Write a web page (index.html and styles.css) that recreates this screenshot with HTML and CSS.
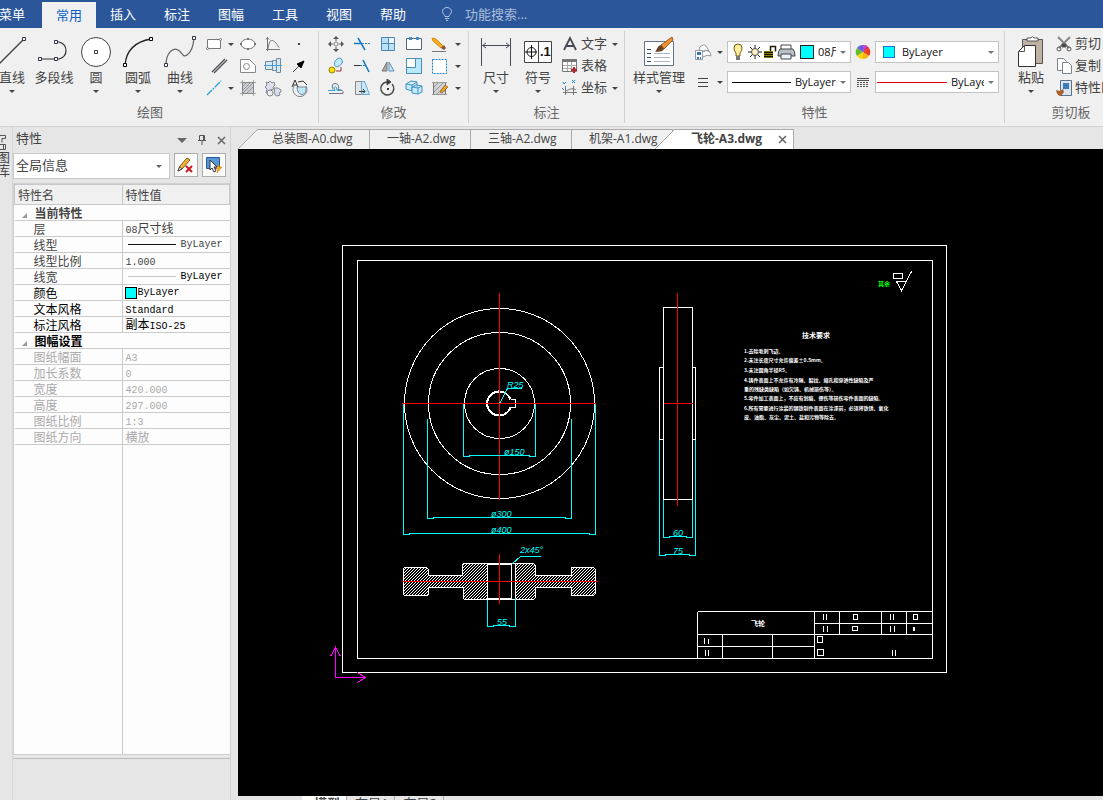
FILE: index.html
```html
<!DOCTYPE html>
<html lang="zh-CN">
<head>
<meta charset="utf-8">
<title>飞轮-A3.dwg</title>
<link rel="stylesheet" href="styles.css">
</head>
<body>
<header class="menubar">
  <nav class="menu">
    <button class="menu-item first">菜单</button>
    <button class="menu-item active">常用</button>
    <button class="menu-item">插入</button>
    <button class="menu-item">标注</button>
    <button class="menu-item">图幅</button>
    <button class="menu-item">工具</button>
    <button class="menu-item">视图</button>
    <button class="menu-item">帮助</button>
  </nav>
  <label class="search">
    <svg width="12" height="14" viewBox="0 0 12 14" fill="none" stroke="#b4c4df"><path d="M4 9.500C4 7.500 1.500 7 1.500 4.500a4.500 4 0 0 1 9 0C10.500 7 8 7.500 8 9.500zM4 11.500h4M5 13.500h2"/></svg>
    <input type="text" placeholder="功能搜索..." aria-label="功能搜索">
  </label>
</header>

<section class="ribbon">
  <div class="group draw">
    <div class="group-body">
      <div class="bigs">
      <button class="big"><svg width="32" height="32" viewBox="0 0 32 32"><path d="M0 31L28 3" stroke="#444" stroke-width="1.500"/><path d="M26.500 1.500h3v3h-3z" fill="#fff" stroke="#2b3440"/></svg><span>直线</span><i class="arrow"></i></button>
      <button class="big"><svg width="32" height="32" viewBox="0 0 32 32" fill="none" stroke="#333"><path d="M3 23h15M18 6h3q7 2 7 8.500T21 23h-3" stroke-width="1.200"/><path d="M.5 21.500h3v3h-3zM16.500 21.500h3v3h-3zM16.500 4.500h3v3h-3z" fill="#fff" stroke="#2b3440"/></svg><span>多段线</span></button>
      <button class="big"><svg width="32" height="32" viewBox="0 0 32 32" fill="#fff" stroke="#444"><circle cx="16" cy="16" r="14.500"/><path d="M14.500 14.500h3v3h-3z"/></svg><span>圆</span><i class="arrow"></i></button>
      <button class="big"><svg width="32" height="32" viewBox="0 0 32 32" fill="none"><path d="M3 29Q5 7 29 3" stroke="#222" stroke-width="1.300"/><path d="M1.500 27.500h3v3h-3zM27.500 1.500h3v3h-3z" fill="#fff" stroke="#000"/></svg><span>圆弧</span><i class="arrow"></i></button>
      <button class="big"><svg width="32" height="32" viewBox="0 0 32 32" fill="none"><path d="M2 29C2 17 9 11 14 14s5 8 9 5q6-4 7-17" stroke="#666" stroke-width="1.300"/><path d="M.5 27.500h3v3h-3zM28.500.5h3v3h-3z" fill="#fff" stroke="#2b3440"/></svg><span>曲线</span><i class="arrow"></i></button>
      </div>
      <div class="tools draw-tools">
        <button class="tool" aria-label="矩形"><svg width="18" height="18" viewBox="0 0 18 18" fill="#fff" stroke="#777"><path d="M2.500 4.500h13v9h-13z"/><circle cx="2.500" cy="13.500" r="1"/><circle cx="15.500" cy="4.500" r="1"/></svg><i class="arrow"></i></button>
        <button class="tool" aria-label="椭圆"><svg width="18" height="18" viewBox="0 0 18 18" fill="#fff" stroke="#777"><ellipse cx="9" cy="9" rx="7" ry="5"/><path d="M1 8h2v2H1zM15 8h2v2h-2zM8 3h2v2H8zM8 13h2v2H8z" fill="#777" stroke="none"/></svg></button>
        <button class="tool" aria-label="公式曲线"><svg width="18" height="18" viewBox="0 0 18 18" fill="none" stroke="#777"><path d="M3.500 2v14M2 14.500h14M2 4.500l1.500-2 1.500 2M4 14C5 7 6 5.500 8 5.500s4 2 7 7"/></svg></button>
        <button class="tool" aria-label="点"><svg width="18" height="18" viewBox="0 0 18 18"><path d="M8 8h2v2H8z" fill="#444"/></svg></button>
        <button class="tool" aria-label="平行线"><svg width="18" height="18" viewBox="0 0 18 18" stroke="#4d4d55" stroke-width="1.400"><path d="M2 15L15 2M4 16L17 3"/></svg></button>
        <button class="tool" aria-label="局部放大"><svg width="18" height="18" viewBox="0 0 18 18" fill="#fff" stroke="#888"><path d="M1.500 2.500h9l6 6v7h-15z"/><circle cx="7.500" cy="9.500" r="3"/></svg></button>
        <button class="tool" aria-label="轴"><svg width="18" height="18" viewBox="0 0 18 18" fill="#d4e8f5" stroke="#718b9c"><path d="M1.500 4.500v8h7v-8zM8.500 3.500v10h4v-10zM12.500 1.500v14h4v-14z"/><path d="M0 8.500h18" stroke="#48a2d8"/></svg></button>
        <button class="tool" aria-label="箭头"><svg width="18" height="18" viewBox="0 0 18 18"><path d="M3 15l6-6" stroke="#444"/><path d="M14 4L7 7l4 4z" stroke="#000"/></svg></button>
        <button class="tool" aria-label="中心线"><svg width="18" height="18" viewBox="0 0 18 18"><path d="M2 16L16 2" stroke="#2aa2df" stroke-width="1.300" stroke-dasharray="7 1 2 1"/></svg><i class="arrow"></i></button>
        <button class="tool" aria-label="剖面线"><svg width="18" height="18" viewBox="0 0 18 18" stroke="#888" fill="#c8cbd0"><path d="M3.500 3.500h11v11h-11z"/><path d="M4 7l3-3M4 11l7-7M4 14L14 4M8 14l6-6M3.500 1v16M14.500 1v16M1 3.500h16M1 14.500h16" stroke-width=".7"/></svg></button>
        <button class="tool" aria-label="齿轮"><svg width="18" height="18" viewBox="0 0 18 18" fill="#d9dfeb" stroke="#818894"><path d="M2 3l2 1 2-2 2 2 2-1 1 3-2 2 1 2-4 1-1 4-3-1 1-4-2-2 2-2z"/><path d="M10 9h4l3 2v2l-2 1 1 2-3 1-2-1z"/><circle cx="6" cy="14" r="3" fill="#eee"/></svg></button>
        <button class="tool" aria-label="填充"><svg width="18" height="18" viewBox="0 0 18 18" fill="none" stroke="#7a8794"><path d="M4 7a7 7 0 1 0 12 0"/><path d="M7 8h9q1 6-4 8Q7 14 7 8" fill="#bfe7fa"/><path d="M2 8l3-7 3 7M3 6h4M8 3l5-1 4 4" stroke="#333"/></svg></button>
      </div>
    </div>
    <div class="group-label">绘图</div>
  </div>

  <div class="group modify">
    <div class="group-body">
      <div class="tools modify-tools">
        <button class="tool" aria-label="平移"><svg width="18" height="18" viewBox="0 0 18 18" fill="#555"><path d="M9 1l3 3H6zM9 17l3-3H6zM1 9l3-3v6zM17 9l-3-3v6z"/><path d="M9 4v2M9 12v2M4 9h2M12 9h2" stroke="#555"/><circle cx="9" cy="9" r="2" fill="#fff" stroke="#777"/></svg></button>
        <button class="tool" aria-label="裁剪"><svg width="18" height="18" viewBox="0 0 18 18"><path d="M1 8.500h8M5 3l7 12" stroke="#1378c8" stroke-width="1.500"/><path d="M9 8.500h8" stroke="#2789c8" stroke-dasharray="2 1"/></svg></button>
        <button class="tool" aria-label="阵列"><svg width="18" height="18" viewBox="0 0 18 18"><path d="M2.500 2.500h13v13h-13z" fill="#b9e2f8" stroke="#5187a8"/><path d="M3 8.500h12M9.500 3v12" stroke="#5187a8"/><path d="M10 3h5v5h-5z" fill="#e9f8ff"/></svg></button>
        <button class="tool" aria-label="打断"><svg width="18" height="18" viewBox="0 0 18 18" fill="#fff" stroke="#526579"><path d="M4 3.500H1.500v11h15v-11H14M7 3.500h4"/><path d="M4 2h3v3H4zM11 2h3v3h-3z" fill="#3b90cd" stroke="none"/></svg></button>
        <button class="tool" aria-label="删除"><svg width="20" height="18" viewBox="0 0 20 18"><path d="M2 3l4 1 7 7-2 2-8-7z" fill="#f7ad20" stroke="#d88809"/><path d="M11 13l3-3 2 3-2 2z" fill="#8b4f3a"/><path d="M2 16.500h14" stroke="#777"/></svg><i class="arrow"></i></button>
        <button class="tool" aria-label="复制"><svg width="18" height="18" viewBox="0 0 18 18"><path d="M9 3q4-4 6 0t-5 7q-5-2-1-7z" fill="#bdeaff" stroke="#5693b1"/><circle cx="5" cy="13" r="3" fill="#f7dc00" stroke="#938400"/><path d="M9 14h5v-4" fill="none" stroke="#a53030"/></svg></button>
        <button class="tool" aria-label="延伸"><svg width="18" height="18" viewBox="0 0 18 18"><path d="M1 8.500h6" stroke="#333"/><path d="M7 8.500h6" stroke="#1683d1" stroke-dasharray="2 1"/><path d="M10 3l6 12" stroke="#1176bd" stroke-width="1.500"/></svg></button>
        <button class="tool" aria-label="镜像"><svg width="18" height="18" viewBox="0 0 18 18"><path d="M8 5v9H3z" fill="#aaa" stroke="#777"/><path d="M10 5v9h5z" fill="#c2e9ff" stroke="#608eaa"/></svg></button>
        <button class="tool" aria-label="缩放"><svg width="18" height="18" viewBox="0 0 18 18" stroke="#4a8cb6"><path d="M1.500 1.500h15v15h-15z" fill="#b9e7fc"/><path d="M1.500 1.500h9v9h-9z" fill="#fff"/></svg></button>
        <button class="tool" aria-label="拉伸"><svg width="20" height="18" viewBox="0 0 20 18"><path d="M2.500 2.500h14v14h-14z" fill="#fff" stroke="#1887c5" stroke-dasharray="2 1"/></svg><i class="arrow"></i></button>
        <button class="tool" aria-label="等距线"><svg width="18" height="18" viewBox="0 0 18 18" fill="none"><path d="M2 14.500h14q1-4-5-4 2-6-3-6-4 0-2 6" stroke="#697581"/><path d="M1 11.500h7q-2-4 0-4t2 4h4" stroke="#31a1d9"/></svg></button>
        <button class="tool" aria-label="倒角"><svg width="18" height="18" viewBox="0 0 18 18"><path d="M2.500 2.500h6v13h-6z" fill="#e2e4e6" stroke="#888"/><path d="M8.500 2.500h3l5 13h-8z" fill="#cbeaf9" stroke="#66a9cf"/><path d="M6 12.500h6M10 10l2 2.500-2 2" fill="none" stroke="#333"/></svg></button>
        <button class="tool" aria-label="旋转"><svg width="18" height="18" viewBox="0 0 18 18" fill="none" stroke="#4a4a4a"><path d="M8 3a6.500 6.500 0 1 0 5 2" stroke-width="1.500"/><path d="M8 0v6l4-3z" fill="#333"/><path d="M8 9h2v2H8z" fill="#333" stroke="none"/></svg></button>
        <button class="tool" aria-label="块"><svg width="18" height="18" viewBox="0 0 18 18" fill="#c7eaff" stroke="#3e93c5"><path d="M1 5l5-3 6 1v7l-5 2-6-2zM1 5l6 1 5-3M7 6v6"/><path d="M7 8l4-2 6 1v6l-4 2-6-1zM7 8l6 1 4-2M13 9v6"/></svg></button>
        <button class="tool" aria-label="剖面编辑"><svg width="20" height="18" viewBox="0 0 20 18"><path d="M3.500 3.500h12v12h-12z" fill="#d0d2d4" stroke="#777"/><path d="M2 3.500h15M2 15.500h15M4 8l4-4M4 13l9-9M7 15l8-8" stroke="#999"/><path d="M10 13l5-7 3 2-6 6z" fill="#eba31f" stroke="#8b5623" stroke-width=".7"/></svg><i class="arrow"></i></button>
      </div>
    </div>
    <div class="group-label">修改</div>
  </div>

  <div class="group annotate">
    <div class="group-body">
      <div class="bigs">
      <button class="big"><svg width="32" height="32" viewBox="0 0 32 32" fill="none" stroke="#454b58"><path d="M1.500 2v28M30.500 2v28M3 9.500h26M6 7L2.500 9.500 6 12M26 7l3.500 2.500L26 12"/></svg><span>尺寸</span><i class="arrow"></i></button>
      <button class="big"><svg width="32" height="32" viewBox="0 0 32 32"><path d="M2.500 5.500h27v21h-27zM16.500 5.500v21" fill="#fff" stroke="#444"/><path d="M9.500 9v14M3 16h12" stroke="#111"/><circle cx="9.500" cy="16" r="4.500" fill="none" stroke="#111"/><text x="18" y="20" class="symbol-text">.1</text></svg><span>符号</span><i class="arrow"></i></button>
      </div>
      <div class="rows">
        <button class="row-tool"><svg width="18" height="18" viewBox="0 0 18 18"><path d="M3 15L9 3l6 12M5 11h8" fill="none" stroke="#454b55" stroke-width="1.800"/></svg><span>文字</span><i class="arrow"></i></button>
        <button class="row-tool"><svg width="18" height="18" viewBox="0 0 18 18"><path d="M1.500 2.500h14v12h-14z" fill="#fff" stroke="#777"/><path d="M1 2h15v3H1z" fill="#777"/><path d="M2 8.500h13M2 11.500h13M6.500 5v9M10.500 5v9" stroke="#aaa"/><path d="M13 10v6M10 13h6" stroke="#b9232d" stroke-width="2"/></svg><span>表格</span></button>
        <button class="row-tool"><svg width="18" height="18" viewBox="0 0 18 18" fill="none"><path d="M4.500 7v9M2 13.500h14M5 12q7-4 10-1M12.500 7v9" stroke="#777"/><path d="M2 3l1 2 2-2M11 1l3 3M14 1l-3 3M1 9l2 2" stroke="#168cca"/></svg><span>坐标</span><i class="arrow"></i></button>
      </div>
    </div>
    <div class="group-label">标注</div>
  </div>

  <div class="group props">
    <div class="group-body">
      <button class="big wide"><svg width="32" height="32" viewBox="0 0 32 32"><path d="M1.500 5.500h29v24h-29z" fill="#fff" stroke="#60748b"/><path d="M4 13.500h4M4 17.500h4M4 21.500h4M4 25.500h4" stroke="#34506e"/><path d="M11 17.500h16M11 21.500h16M11 25.500h16" stroke="#a9b6c9"/><path d="M29 1L18 9l3 4 9-9z" fill="#e89432" stroke="#9d5a20"/><path d="M18 9l3 4c-2 4-6 2-9 3 2-2 2-6 6-7z" fill="#69401f"/></svg><span>样式管理</span><i class="arrow"></i></button>
      <div class="prop-grid">
        <button class="tool" aria-label="图层"><svg width="18" height="18" viewBox="0 0 18 18" fill="#fff" stroke="#919aa5"><path d="M5 5q5-5 7-2l3 5q-3-2-8 1zM8 9q5-3 8 0l1 4q-4-2-8 1z"/><path d="M1.500 7.500h7v9h-7z"/><path d="M3 9h4v3H3zM3 14h2v2H3zM6 14h1v2H6z" fill="#3275b0" stroke="none"/></svg><i class="arrow"></i></button>
        <div class="combo">
          <svg width="69" height="18" viewBox="0 0 69 18">
            <path d="M3 5q0-4 4-4t4 4q0 3-2 5v3H5v-3Q3 8 3 5z" fill="#ffef9a" stroke="#755b1b"/><path d="M5 13h4v4H5z" fill="#777"/>
            <path d="M24 2v3M24 13v3M17 9h3M28 9h3M19 4l2 2M27 12l2 2M29 4l-2 2M19 14l2-2" stroke="#222"/><circle cx="24" cy="9" r="3.500" fill="#ffedc7" stroke="#444"/>
            <path d="M33 8h9v7h-9z" fill="#8b7c00"/><path d="M33 9.500h9M33 11.500h9M33 13.500h9" stroke="#111"/><path d="M39.500 8V3.500h5v5" fill="none" stroke="#221d00" stroke-width="1.500"/>
            <path d="M50 2h10v6H50z" fill="#fff" stroke="#444"/><path d="M49 6h13q2 2 2 7H47q0-5 2-7z" fill="#b8c0c7" stroke="#444"/><path d="M50 11h10v5H50z" fill="#eaf4ff" stroke="#444"/>
          </svg>
          <i class="swatch"></i>
          <select class="layer" aria-label="层"><option>08尺寸线</option></select>
        </div>
        <svg class="picon" width="16" height="16" viewBox="0 0 16 16"><path d="M8 8V1a7 7 0 0 1 6 3z" fill="#ee233a"/><path d="M8 8l6-4a7 7 0 0 1 0 8z" fill="#e93c24"/><path d="M8 8l6 4a7 7 0 0 1-6 3z" fill="#f5b60f"/><path d="M8 8v7a7 7 0 0 1-6-3z" fill="#ffd50a"/><path d="M8 8l-6 4a7 7 0 0 1 0-8z" fill="#69bd2b"/><path d="M8 8L2 4a7 7 0 0 1 6-3z" fill="#5c64e2"/><path d="M8 1a7 7 0 0 1 4 1L8 8z" fill="#bf49ee"/></svg>
        <div class="combo color">
          <i class="swatch blue"></i>
          <select aria-label="颜色"><option>ByLayer</option></select>
        </div>
        <button class="tool" aria-label="线宽"><svg width="18" height="18" viewBox="0 0 18 18" stroke="#444"><path d="M4 5.500h10M4 9.500h10M4 13.500h10"/></svg><i class="arrow"></i></button>
        <div class="combo">
          <i class="sample black"></i>
          <select aria-label="线宽值"><option>ByLayer</option></select>
        </div>
        <svg class="picon" width="16" height="16" viewBox="0 0 16 16" stroke="#555"><path d="M2 4.500h12M2 6.500h12"/><path d="M2 8.500h12M2 10.500h12M2 12.500h12" stroke-dasharray="2 1"/></svg>
        <div class="combo">
          <i class="sample red"></i>
          <select aria-label="线型"><option>ByLayer</option></select>
        </div>
      </div>
    </div>
    <div class="group-label">特性</div>
  </div>

  <div class="group clip">
    <div class="group-body">
      <button class="big"><svg width="32" height="32" viewBox="0 0 32 32"><path d="M7.500 3.500h20v24h-20z" fill="#bfb2a3" stroke="#555"/><path d="M12 5V2h4q1-3 3 0h4v3z" fill="#fff" stroke="#555"/><path d="M9.500 9.500h11v21h-17V15.500z" fill="#fff" stroke="#333"/><path d="M4 15.500h5.500v-6" fill="none" stroke="#555"/></svg><span>粘贴</span><i class="arrow"></i></button>
      <div class="rows">
        <button class="row-tool"><svg width="18" height="18" viewBox="0 0 18 18" fill="none" stroke="#555"><path d="M3 2l11 11M15 2L4 13" stroke="#888" stroke-width="2"/><circle cx="4" cy="14" r="2"/><circle cx="14" cy="14" r="2"/><path d="M7 9h4v3H7z" fill="#444"/></svg><span>剪切</span></button>
        <button class="row-tool"><svg width="18" height="18" viewBox="0 0 18 18" fill="#fff" stroke="#7b858e"><path d="M2.500 1.500h6l3 3v9h-9z"/><path d="M7.500 5.500h6l3 3v8h-9z"/></svg><span>复制</span></button>
        <button class="row-tool"><svg width="18" height="18" viewBox="0 0 18 18"><path d="M5.500 1.500h11v15h-11z" fill="#dce4ef" stroke="#59738d"/><path d="M8 4h6v6H8z" fill="#3b7cb5"/><path d="M1 11l4 1 3-2 1 3-3 4q-4 0-5-6z" fill="#a9612c"/></svg><span>特性匹配</span></button>
      </div>
    </div>
    <div class="group-label">剪切板</div>
  </div>
</section>

<main class="workspace">
  <aside class="dock"><svg width="8" height="16" viewBox="0 0 8 16" fill="none" stroke="#555"><path d="M0 .5h5.500v3H2v4M0 9.500h5.500v5H0M3.500 9v5"/></svg><span>图库</span></aside>
  <section class="panel">
    <div class="panel-title"><h2>特性</h2>
      <button aria-label="菜单"><i class="arrow large"></i></button>
      <button aria-label="固定"><svg width="10" height="12" viewBox="0 0 10 12" fill="none" stroke="#555"><path d="M2.500 1.500h5v5h-5zM1 6.500h8M5 7v4M6.500 2v4"/></svg></button>
      <button aria-label="关闭"><svg width="9" height="9" viewBox="0 0 9 9" stroke="#666" stroke-width="1.500"><path d="M1 1l7 7M8 1L1 8"/></svg></button>
    </div>
    <div class="panel-tools">
      <select aria-label="对象"><option>全局信息</option></select>
      <button aria-label="取消选择"><svg width="18" height="18" viewBox="0 0 18 18"><path d="M1 15l2-5 7-8 3 2-8 9z" fill="#f0b32d" stroke="#7a5a1a"/><path d="M1 15l1.500-4L5 13z" fill="#fff" stroke="#444"/><path d="M9 10l6 6M15 10l-6 6" stroke="#cf1720" stroke-width="2"/></svg></button>
      <button aria-label="快速选择"><svg width="18" height="18" viewBox="0 0 18 18"><path d="M1.500 1.500h13v11h-13z" fill="#5696d4" stroke="#255896"/><path d="M5 4l7 7H9l2 4-2 1-2-4-2 2z" fill="#fff" stroke="#333"/><path d="M14 8l-3 5h2l-1 4 5-6h-3z" fill="#f5b228" stroke="#be7100" stroke-width=".5"/></svg></button>
    </div>
    <div class="sheet">
      <table>
        <thead><tr><th>特性名</th><th>特性值</th></tr></thead>
        <tbody>
          <tr class="section"><td colspan="2"><i class="fold"></i>当前特性</td></tr>
          <tr><td>层</td><td><span class="mono">08</span>尺寸线</td></tr>
          <tr><td>线型</td><td><div class="line-value"><i class="dark"></i><span class="mono">ByLayer</span></div></td></tr>
          <tr><td>线型比例</td><td><span class="mono">1.000</span></td></tr>
          <tr class="value-on"><td>线宽</td><td><div class="line-value"><i></i><span class="mono">ByLayer</span></div></td></tr>
          <tr class="on"><td>颜色</td><td><div class="color-value"><i></i><span class="mono">ByLayer</span></div></td></tr>
          <tr class="on"><td>文本风格</td><td><span class="mono">Standard</span></td></tr>
          <tr class="on"><td>标注风格</td><td>副本<span class="mono">ISO-25</span></td></tr>
          <tr class="section on"><td colspan="2"><i class="fold"></i>图幅设置</td></tr>
          <tr class="off"><td>图纸幅面</td><td><span class="mono">A3</span></td></tr>
          <tr class="off"><td>加长系数</td><td><span class="mono">0</span></td></tr>
          <tr class="off"><td>宽度</td><td><span class="mono">420.000</span></td></tr>
          <tr class="off"><td>高度</td><td><span class="mono">297.000</span></td></tr>
          <tr class="off"><td>图纸比例</td><td><span class="mono">1:3</span></td></tr>
          <tr class="off"><td>图纸方向</td><td>横放</td></tr>
        </tbody>
      </table>
      <div class="blank"></div>
    </div>
    <div class="hint"></div>
  </section>

  <section class="document">
    <div class="tabs">
      <button class="tab slanted"><svg class="slope" width="20" height="20" viewBox="0 0 20 20"><path d="M0 20L20 0v20z" fill="#f0f0f0"/><path d="M0 20L20 0" stroke="#aaa"/></svg><span>总装图-A0.dwg</span></button>
      <button class="tab"><span>一轴-A2.dwg</span></button>
      <button class="tab"><span>三轴-A2.dwg</span></button>
      <button class="tab"><span>机架-A1.dwg</span></button>
      <button class="tab slanted current"><svg class="slope" width="20" height="20" viewBox="0 0 20 20"><path d="M0 20L20 0v20z" fill="#fff"/><path d="M0 20L20 0" stroke="#aaa"/></svg><span>飞轮-A3.dwg</span><svg width="9" height="9" viewBox="0 0 9 9" stroke="#666" stroke-width="1.500"><path d="M1 1l7 7M8 1L1 8"/></svg></button>
    </div>
    <div class="canvas">
      <svg width="865" height="647" viewBox="238 149 865 647">
        <defs><pattern id="hatch" width="3" height="3" patternUnits="userSpaceOnUse" patternTransform="translate(.5 .5)"><path d="M0 2h1v1H0zM1 1h1v1H1zM2 0h1v1H2z" fill="#fff" stroke="none" shape-rendering="crispEdges"/></pattern></defs>
        <g transform="translate(.5 .5)" fill="none" stroke="#fff" shape-rendering="crispEdges">
          <path d="M342 245h604v427H342zM357 260h575v398H357z"/>
          <g>
            <circle cx="499" cy="403" r="95"/><circle cx="499" cy="403" r="71"/><circle cx="499" cy="403" r="35"/>
            <path d="M510 399A12 12 0 1 0 510 407" stroke-width="2"/><path d="M510 399h5v8h-5"/>
          </g>
          <path d="M663 307h29v192h-29zM663 367h-4v72h4M692 367h3v72h-3"/>
          <path d="M404 567h22l2 2v6h34v-11l2-1h23v36h-23l-1-1v-11h-35v7l-2 1h-22l-1-1v-26z" fill="url(#hatch)"/>
          <path d="M515 563h18l2 2v10h36v-8h22l2 2v24l-2 2h-22v-8h-36v10l-2 2h-18z" fill="url(#hatch)"/>
          <path d="M487 563h28v36h-28zM487 564h24v34h-24z"/>
          <path d="M697 611h235M697 611v47M814 611v47M697 634h235M697 646h117M722 634v24M772 634v24M814 623h118M839 611v23M881 611v23M906 611v23"/>
          <path d="M823 613v6M826 613v6M823 625v6M827 625v6M853 614h4v5h-4zM852 626h5v4h-5zM890 613v6M893 613v6M890 625v6M894 625v6M913 614h4v5h-4zM913 626v4M914 626v4M704 637v6M708 638v5M705 649v6M708 649v6M817 636h5v6h-5zM817 649h6v6h-6zM892 649v6M895 649v6"/>
          <path d="M893 273h9v5h-9zM896 281h10M896 281l5 9 10-19"/>
          <path stroke="#f00" d="M499 292v207M401 403h194M677 292v213M663 403h29M499 553v50M401 581h196"/>
          <path stroke="#0ff" d="M463 403v53h6v-1h60v1h6v-53M427 418v100h6v-1h132v1h6v-100M403 403v131h6v-1h180v1h6v-131M663 499v38h6v-1h17v1h6v-38M659 439v116h6v-1h24v1h6v-116M487 599v27h6v-1h16v1h6v-29M499 403l8-15h14M512 563l8-7h20"/>
          <path stroke="#f0f" d="M335 648v29h30M330 656l5-9 5 9M357 672l8 5-8 5"/>
        </g>
        <g class="dims">
          <text x="504" y="455">ø150</text><text x="507" y="388">R25</text><text x="491" y="517">ø300</text><text x="491" y="533">ø400</text><text x="673" y="536">60</text><text x="673" y="554">75</text><text x="520" y="553">2x45°</text><text x="497" y="625">55</text>
        </g>
        <text class="rest" x="878" y="286">其余</text>
        <text class="notes-title" x="802" y="338">技术要求</text>
        <g class="notes">
          <text x="744" y="353">1.去除毛刺飞边。</text>
          <text x="744" y="362">2.未注长度尺寸允许偏差±0.5mm。</text>
          <text x="744" y="372">3.未注圆角半径R5。</text>
          <text x="744" y="382">4.铸件表面上不允许有冷隔、裂纹、缩孔和穿透性缺陷及严</text>
          <text x="744" y="391">重的残缺类缺陷（如欠铸、机械损伤等）。</text>
          <text x="744" y="400">5.零件加工表面上，不应有划痕、擦伤等损伤零件表面的缺陷。</text>
          <text x="744" y="410">6.所有需要进行涂装的钢铁制件表面在涂漆前，必须将铁锈、氧化</text>
          <text x="744" y="419">皮、油脂、灰尘、泥土、盐和污物等除去。</text>
        </g>
        <text class="notes-title" x="751" y="626">飞轮</text>
      </svg>
    </div>
    <div class="layouts">
      <button class="layout current">模型</button><button class="layout">布局1</button><button class="layout">布局2</button>
    </div>
  </section>
</main>
</body>
</html>
```
FILE: styles.css
```css
* { box-sizing: border-box; }
body {
  margin: 0;
  height: 100vh;
  display: flex;
  flex-direction: column;
  overflow: hidden;
  background: #e6e6e6;
  color: #444;
  font: 13px/18px "Open Sans", "Noto Sans CJK SC", sans-serif;
}
button, select, input { font: inherit; color: inherit; }
button { border: 0; padding: 0; background: none; white-space: nowrap; }
svg { flex: none; }
select {
  appearance: none;
  border: 0;
  border-radius: 0;
  background: none;
  min-width: 0;
}
.arrow {
  flex: none;
  border: 3px solid transparent;
  border-top-color: #444;
  border-bottom: 0;
}
.arrow.large { border-width: 5px 5px 0; border-top-color: #666; }

.menubar { flex: none; height: 28px; display: flex; background: #2b579a; color: #fff; }
.menu { display: flex; }
.menu-item { width: 54px; line-height: 26px; }
.menu-item.first { width: 42px; padding-right: 17px; direction: rtl; }
.menu-item.active { margin-top: 2px; line-height: 22px; background: #f0f0f0; color: #0a5fc7; }
.search { display: flex; align-items: center; gap: 12px; margin-left: 21px; }
.search input { width: 120px; border: 0; padding: 0; background: none; outline: 0; }
.search input::placeholder { color: #a9bcdb; opacity: 1; }

.ribbon {
  flex: none;
  height: 99px;
  display: flex;
  padding: 3px 0;
  background: #f0f0f0;
  border-bottom: 1px solid #d2d2d2;
  overflow: hidden;
}
.group { flex: none; display: flex; flex-direction: column; border-right: 1px solid #d2d2d2; }
.group-body { height: 73px; display: flex; padding-top: 2px; }
.group-label { text-align: center; line-height: 16px; color: #666; }
.draw { width: 319px; }
.draw .group-label { margin-left: -18px; }
.modify { width: 150px; }
.modify .group-body { padding-left: 4px; }
.annotate { width: 156px; }
.annotate .group-body { padding-left: 6px; }
.props { width: 380px; }
.props .group-body { padding-left: 4px; }
.clip { width: 132px; border: 0; }
.clip .group-body { padding-left: 5px; }
.bigs { display: flex; }
.draw .bigs { margin-left: -9px; padding-right: 2px; }
.big { width: 42px; display: flex; flex-direction: column; align-items: center; justify-content: flex-start; padding-top: 3px; }
.big .arrow { margin-top: 4px; }
.big.wide { width: 60px; }
.tools { display: grid; grid-auto-rows: 22px; }
.draw-tools { grid-template-columns: 32px 25px 26px 26px; }
.modify-tools { grid-template-columns: repeat(4, 26px) 36px; }
.tool { display: flex; align-items: center; justify-content: center; gap: 5px; }
.rows { display: grid; grid-auto-rows: 22px; }
.row-tool { display: flex; align-items: center; gap: 2px; line-height: 16px; }
.row-tool span { padding-bottom: 2px; }
.row-tool .arrow { margin-left: 3px; }
.annotate .rows { margin-left: 2px; }
.clip .rows { margin-left: 3px; }
.symbol-text { font: bold 13px "Liberation Sans", sans-serif; fill: #111; }
.prop-grid {
  display: grid;
  grid-template-columns: 38px 124px 24px 124px;
  grid-auto-rows: 22px;
  row-gap: 8px;
  padding-top: 8px;
}
.picon { align-self: center; justify-self: center; }
.combo {
  display: flex;
  align-items: center;
  gap: 4px;
  padding: 0 4px;
  border: 1px solid #c3c3c3;
  background: #fff;
  color: #111;
  font-size: 11px;
  min-width: 0;
}
.combo::after {
  content: "";
  flex: none;
  border: 3px solid transparent;
  border-top-color: #777;
  border-bottom: 0;
}
.combo select { flex: 1; padding: 0; }
.combo .swatch { flex: none; width: 14px; height: 14px; background: #0ff; border: 1px solid #222; }
.combo .blue { border-color: #1778cf; margin: 0 3px; width: 12px; height: 12px; }
.combo .sample { flex: none; width: 59px; height: 1px; background: #000; }
.combo .red { width: 70px; background: #e00000; margin-left: -3px; }
.combo svg { margin: 0 -4px 0 -1px; }

.workspace { flex: 1; min-height: 0; display: flex; }
.dock {
  flex: none;
  width: 13px;
  padding-top: 8px;
  overflow: hidden;
  display: flex;
  flex-direction: column;
  border-right: 1px solid #d5d5d5;
}
.dock span { writing-mode: vertical-rl; margin-left: -12px; line-height: 18px; }
.panel { flex: none; width: 218px; margin-right: 7px; display: flex; flex-direction: column; border-right: 1px solid #d2d2d2; }
.panel-title { flex: none; height: 26px; display: flex; align-items: center; gap: 10px; padding: 0 4px 0 3px; }
.panel-title h2 { flex: 1; margin: 0; padding-bottom: 4px; font: inherit; }
.panel-title button { display: flex; }
.panel-tools { flex: none; display: flex; gap: 4px; height: 26px; }
.panel-tools select {
  width: 157px;
  padding: 0 2px 2px;
  border: 1px solid #c9c9c9;
  background: #fff url("data:image/svg+xml,%3Csvg xmlns='http://www.w3.org/2000/svg' width='6' height='3'%3E%3Cpath d='M0 0h6L3 3z' fill='%23666'/%3E%3C/svg%3E") no-repeat right 7px center;
}
.panel-tools button { width: 24px; height: 24px; display: flex; align-items: center; justify-content: center; border: 1px solid #adadad; background: #fbfbfb; }
.sheet { flex: 1; min-height: 0; display: flex; flex-direction: column; margin-top: 4px; border: 1px solid #d0d0d0; border-right: 0; background: #fdfdfd; }
table { width: 100%; border-collapse: collapse; table-layout: fixed; font: 12px/15px "Noto Sans CJK SC", sans-serif; }
th { height: 20px; padding: 0 3px; border: 1px solid #c8c8c8; background: #f0f0f0; text-align: left; font-weight: 400; }
td { height: 16px; padding: 0 3px; border-bottom: 1px solid #cbcbcb; line-height: 14px; }
td + td { border-left: 1px solid #cbcbcb; }
td:first-child { padding-left: 19px; }
.section td { font-weight: 700; }
.fold { display: inline-block; margin: 0 8px 0 -12px; border-left: 5px solid transparent; border-bottom: 5px solid #999; }
.on, .value-on td + td { color: #000; }
.off { color: #aaa; }
.mono { font: 10px/10px "Liberation Mono", monospace; }
.line-value { display: flex; align-items: center; gap: 5px; height: 14px; padding-left: 2px; }
.line-value i { width: 48px; height: 1px; background: #c5c5c5; }
.line-value .dark { background: #111; }
.color-value { display: flex; align-items: center; gap: 1px; height: 14px; margin-left: -1px; }
.color-value i { width: 12px; height: 12px; background: #0ff; border: 1px solid #000; }
.blank { flex: 1; background: linear-gradient(90deg, transparent 108px, #cbcbcb 108px, #cbcbcb 109px, transparent 109px); }
.hint { flex: none; height: 42px; margin-top: 3px; border-top: 1px solid #bcbcbc; }

.document { flex: 1; min-width: 0; display: flex; flex-direction: column; }
.tabs { flex: none; height: 22px; display: flex; padding-top: 2px; font-size: 12px; line-height: 16px; }
.tab { width: 101px; display: flex; align-items: center; padding: 0 0 1px 17px; border-top: 1px solid #aaa; border-right: 1px solid #aaa; background: #f0f0f0; }
.tab span { flex: none; }
.tab.slanted { position: relative; margin-left: 20px; width: 112px; padding-left: 14px; }
.slope { position: absolute; right: 100%; top: -1px; }
.tab.current { margin-left: 2px; width: 119px; padding-left: 16px; gap: 16px; background: #fff; font-weight: 700; }
.canvas { flex: 1; min-height: 0; overflow: hidden; background: #000; }
.canvas svg { display: block; }
.dims { fill: #0ff; font: italic 9px "Liberation Sans Narrow", "Liberation Sans", sans-serif; }
.notes { fill: #fff; font: bold 5px "Noto Sans CJK SC", sans-serif; }
.notes-title { fill: #fff; font: bold 7px "Noto Sans CJK SC", sans-serif; }
.rest { fill: #0f0; font: bold 6px "Noto Sans CJK SC", sans-serif; }
.layouts { flex: none; height: 4px; overflow: hidden; display: flex; align-items: flex-start; padding-left: 64px; }
.layout { padding: 0 6px 0 8px; border-right: 1px solid #aaa; line-height: 14px; }
.layout.current { background: #fff; font-weight: 700; padding-left: 12px; }
```
